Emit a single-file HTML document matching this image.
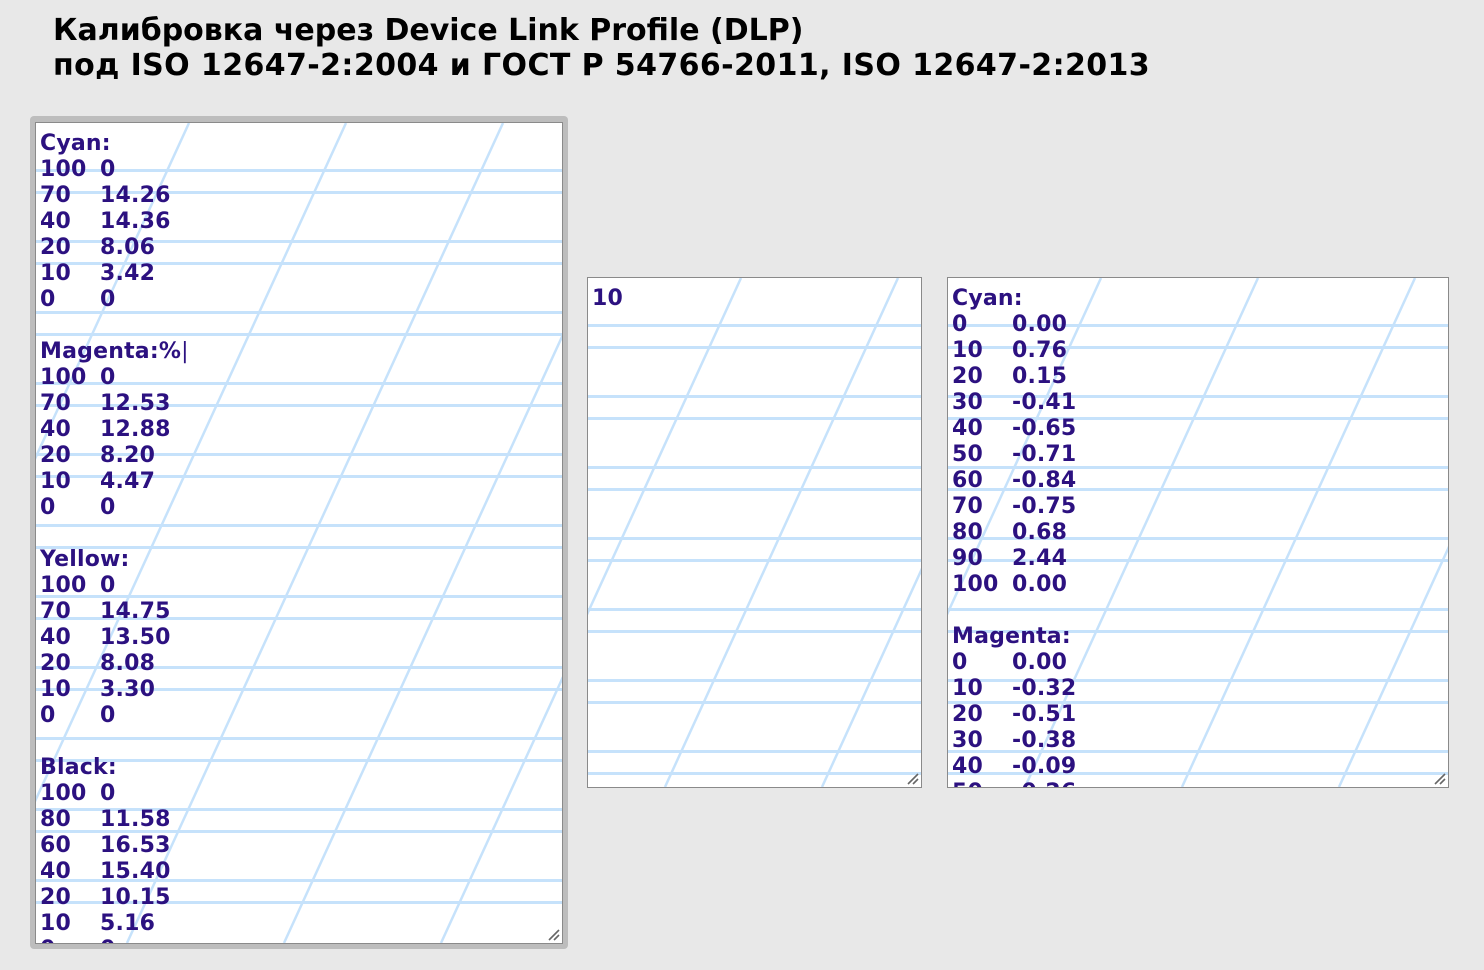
<!DOCTYPE html>
<html><head><meta charset="utf-8"><style>
html,body{margin:0;padding:0;background:#e8e8e8;width:1484px;height:970px;overflow:hidden}
h1{position:absolute;left:53px;top:13px;margin:0;font:bold 30px/35px "DejaVu Sans","Liberation Sans",sans-serif;color:#000;white-space:nowrap}
.box{position:absolute;background:#fff;border:1px solid #8a8a8a;overflow:hidden;
background-image:repeating-linear-gradient(180deg,transparent 0 46px,#c6e2fb 46px 49px,transparent 49px 68px,#c6e2fb 68px 71px);}
.box svg{position:absolute;left:0;top:0}
.box pre{position:relative;margin:0;padding:8px 0 0 4px;font:bold 22px/26px "DejaVu Sans","Liberation Sans",sans-serif;letter-spacing:0.2px;color:#2c1180;tab-size:60px;-moz-tab-size:60px;white-space:pre}
.ring{position:absolute;left:30px;top:116px;width:538px;height:833px;background:#bdbdbd;border-radius:4px}
.grip{position:absolute;right:2px;bottom:2px;width:12px;height:12px}
</style></head><body>
<h1>Калибровка через Device Link Profile (DLP)<br><span style="letter-spacing:0.4px">под ISO 12647-2:2004 и ГОСТ Р 54766-2011, ISO 12647-2:2013</span></h1>
<div class="ring"></div>
<div class="box" style="left:35px;top:122px;width:526px;height:820px">
<svg width="526" height="820"><g stroke="#c6e2fb" stroke-width="2.5">
<line x1="153" y1="0" x2="-223" y2="820"/><line x1="310" y1="0" x2="-66" y2="820"/><line x1="467" y1="0" x2="91" y2="820"/><line x1="624" y1="0" x2="248" y2="820"/><line x1="781" y1="0" x2="405" y2="820"/><line x1="938" y1="0" x2="562" y2="820"/></g></svg>
<pre>Cyan:
100	0
70	14.26
40	14.36
20	8.06
10	3.42
0	0

Magenta:%<span style="font-weight:normal;">|</span>
100	0
70	12.53
40	12.88
20	8.20
10	4.47
0	0

Yellow:
100	0
70	14.75
40	13.50
20	8.08
10	3.30
0	0

Black:
100	0
80	11.58
60	16.53
40	15.40
20	10.15
10	5.16
0	0</pre>
<svg class="grip" viewBox="0 0 12 12" style="left:auto;top:auto"><g stroke="#666" stroke-width="1.6"><line x1="1" y1="11" x2="11" y2="1"/><line x1="6" y1="11" x2="11" y2="6"/></g></svg>
</div>
<div class="box" style="left:587px;top:277px;width:333px;height:509px">
<svg width="333" height="509"><g stroke="#c6e2fb" stroke-width="2.5">
<line x1="153" y1="0" x2="-80" y2="509"/><line x1="310" y1="0" x2="77" y2="509"/><line x1="467" y1="0" x2="234" y2="509"/><line x1="624" y1="0" x2="391" y2="509"/></g></svg>
<pre>10</pre>
<svg class="grip" viewBox="0 0 12 12" style="left:auto;top:auto"><g stroke="#666" stroke-width="1.6"><line x1="1" y1="11" x2="11" y2="1"/><line x1="6" y1="11" x2="11" y2="6"/></g></svg>
</div>
<div class="box" style="left:947px;top:277px;width:500px;height:509px">
<svg width="500" height="509"><g stroke="#c6e2fb" stroke-width="2.5">
<line x1="153" y1="0" x2="-80" y2="509"/><line x1="310" y1="0" x2="77" y2="509"/><line x1="467" y1="0" x2="234" y2="509"/><line x1="624" y1="0" x2="391" y2="509"/><line x1="781" y1="0" x2="548" y2="509"/></g></svg>
<pre>Cyan:
0	0.00
10	0.76
20	0.15
30	-0.41
40	-0.65
50	-0.71
60	-0.84
70	-0.75
80	0.68
90	2.44
100	0.00

Magenta:
0	0.00
10	-0.32
20	-0.51
30	-0.38
40	-0.09
50	-0.26</pre>
<svg class="grip" viewBox="0 0 12 12" style="left:auto;top:auto"><g stroke="#666" stroke-width="1.6"><line x1="1" y1="11" x2="11" y2="1"/><line x1="6" y1="11" x2="11" y2="6"/></g></svg>
</div>
</body></html>
